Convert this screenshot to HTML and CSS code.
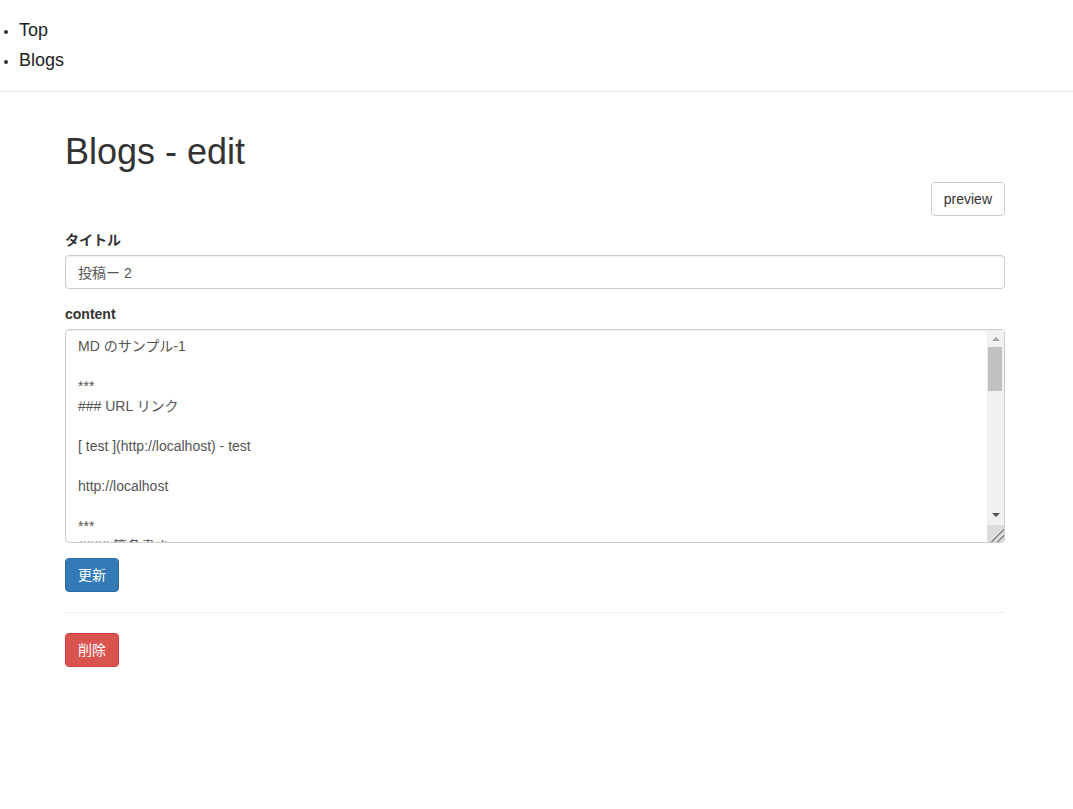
FILE: index.html
```html
<!DOCTYPE html>
<html lang="ja">
<head>
<meta charset="utf-8">
<title>Blogs - edit</title>
<link rel="stylesheet" href="styles.css">
</head>
<body>
<nav class="topnav">
  <ul class="topnav-list">
    <li><a href="#">Top</a></li>
    <li><a href="#">Blogs</a></li>
  </ul>
</nav>
<main class="page">
  <h1 class="page-title">Blogs - edit</h1>
  <div class="toolbar">
    <button type="button" class="btn btn-default">preview</button>
  </div>
  <form class="edit-form">
    <div class="form-group">
      <label class="form-label" for="title">タイトル</label>
      <input id="title" class="form-control" type="text" value="投稿ー 2">
    </div>
    <div class="form-group">
      <label class="form-label" for="content">content</label>
      <div class="textarea-wrap">
        <textarea id="content" class="form-control form-textarea" rows="10">MD のサンプル-1

***
### URL リンク

[ test ](http://localhost) - test

http://localhost

***
#### 箇条書き

* りんご
* みかん
* ぶどう

***
#### 番号付きリスト

1. 一番目
2. 二番目
3. 三番目

***
#### 引用

&gt; 引用のテキスト
&gt; 二行目

***
#### コード

    console.log("hello");

***
#### 表

| 名前 | 値 |
|------|----|
| a    | 1  |
| b    | 2  |

***
#### 強調

**太字** と *斜体*
</textarea>
        <div class="scrollbar" aria-hidden="true">
          <div class="sb-btn sb-up"></div>
          <div class="sb-track"><div class="sb-thumb"></div></div>
          <div class="sb-btn sb-down"></div>
        </div>
        <div class="sb-corner" aria-hidden="true"></div>
      </div>
    </div>
    <div class="form-actions">
      <button type="submit" class="btn btn-primary">更新</button>
    </div>
  </form>
  <hr class="divider">
  <div class="form-actions">
    <button type="button" class="btn btn-danger">削除</button>
  </div>
</main>
</body>
</html>
```
FILE: styles.css
```css
* {
  box-sizing: border-box;
}

html, body {
  margin: 0;
  padding: 0;
  background: #fff;
}

body {
  font-family: "Liberation Sans", Arial, "Noto Sans CJK JP", sans-serif;
  font-size: 14px;
  line-height: 20px;
  color: #333;
}

.topnav {
  padding: 15px 0 16px;
  border-bottom: 1px solid #e7e7e7;
}

.topnav-list {
  margin: 0;
  padding-left: 19px;
  list-style: disc;
  font-size: 18px;
  line-height: 30px;
}

.topnav-list li::marker {
  font-size: 14px;
}

.topnav-list a {
  color: #222;
  text-decoration: none;
}

.page {
  width: 940px;
  margin-left: 65px;
}

.page-title {
  margin: 40px 0 10px;
  font-size: 36px;
  line-height: 39.6px;
  font-weight: 500;
  color: #333;
}

.toolbar {
  display: flex;
  justify-content: flex-end;
  margin-bottom: 14px;
}

.form-group {
  margin-bottom: 15px;
}

.form-label {
  display: inline-block;
  margin-bottom: 5px;
  font-weight: bold;
}

.form-control {
  display: block;
  width: 100%;
  height: 34px;
  padding: 6px 12px;
  font-family: inherit;
  font-size: 14px;
  line-height: 20px;
  color: #555;
  background: #fff;
  border: 1px solid #ccc;
  border-radius: 4px;
  box-shadow: inset 0 1px 1px rgba(0, 0, 0, 0.075);
  margin: 0;
}

.textarea-wrap {
  position: relative;
}

.form-textarea {
  height: 214px;
  padding-right: 30px;
  resize: none;
  overflow: hidden;
}

.scrollbar {
  position: absolute;
  top: 1px;
  right: 1px;
  bottom: 18px;
  width: 17px;
  background: #f1f1f1;
  display: flex;
  flex-direction: column;
}

.sb-btn {
  height: 17px;
  flex: none;
  display: flex;
  justify-content: center;
}

.sb-up {
  align-items: flex-start;
  padding-top: 7px;
}

.sb-up::before {
  content: "";
  border-left: 4px solid transparent;
  border-right: 4px solid transparent;
  border-bottom: 4px solid #a3a3a3;
}

.sb-down {
  align-items: flex-start;
  padding-top: 5px;
}

.sb-down::before {
  content: "";
  border-left: 4px solid transparent;
  border-right: 4px solid transparent;
  border-top: 4px solid #505050;
}

.sb-track {
  flex: 1;
  padding: 0 2px 0 1px;
}

.sb-thumb {
  height: 44px;
  background: #c1c1c1;
}

.sb-corner {
  position: absolute;
  right: 1px;
  bottom: 1px;
  width: 17px;
  height: 17px;
  background:
    linear-gradient(135deg, transparent 0 60%, #8a8a8a 60% 65%, transparent 65% 78%, #8a8a8a 78% 83%, transparent 83%),
    #dcdcdc;
  border-bottom-right-radius: 3px;
}

.btn {
  display: inline-block;
  height: 34px;
  padding: 6px 12px;
  font-family: inherit;
  font-size: 14px;
  line-height: 20px;
  border: 1px solid transparent;
  border-radius: 4px;
  cursor: pointer;
  margin: 0;
}

.btn-default {
  color: #333;
  background: #fff;
  border-color: #ccc;
}

.btn-primary {
  color: #fff;
  background: #337ab7;
  border-color: #2e6da4;
}

.btn-danger {
  color: #fff;
  background: #d9534f;
  border-color: #d43f3a;
}

.form-actions {
  display: flex;
}

.edit-form {
  margin: 0;
}

.divider {
  margin: 20px 0;
  border: 0;
  border-top: 1px solid #eee;
}
```
